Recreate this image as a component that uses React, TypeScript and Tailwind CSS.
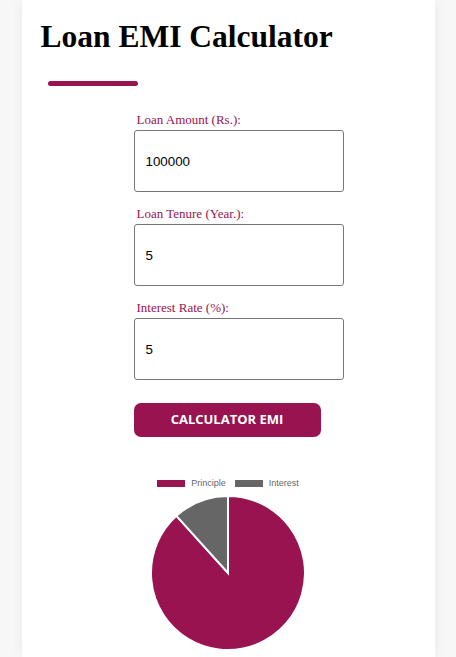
import React from "react";

const MAROON = "#98134f";

function pieSlice(cx: number, cy: number, r: number, startFrac: number, endFrac: number) {
  const a0 = startFrac * Math.PI * 2 - Math.PI / 2;
  const a1 = endFrac * Math.PI * 2 - Math.PI / 2;
  const x0 = cx + r * Math.cos(a0);
  const y0 = cy + r * Math.sin(a0);
  const x1 = cx + r * Math.cos(a1);
  const y1 = cy + r * Math.sin(a1);
  const large = endFrac - startFrac > 0.5 ? 1 : 0;
  return `M${cx} ${cy} L${x0} ${y0} A${r} ${r} 0 ${large} 1 ${x1} ${y1} Z`;
}

function Field({ label, value }: { label: string; value: string }) {
  return (
    <div className="flex flex-col">
      <label className="pl-[3px] mb-[3px] text-[13px] leading-[15px] text-[#98134f] font-['Liberation_Serif',serif]">
        {label}
      </label>
      <input
        readOnly
        value={value}
        className="w-[210px] h-[62px] px-[11px] border border-[#767676] rounded-[3px] text-[13.33px] text-black font-['Liberation_Sans',Arial,sans-serif] outline-none"
      />
    </div>
  );
}

export default function App() {
  const principal = 100000;
  const r = 5 / 1200;
  const n = 60;
  const emi = (principal * r * Math.pow(1 + r, n)) / (Math.pow(1 + r, n) - 1);
  const interest = emi * n - principal;
  const principalFrac = principal / (principal + interest);

  return (
    <div className="min-h-screen bg-[#f7f7f7]">
      <div className="mx-auto w-[413px] min-h-[657px] bg-white shadow-[0_0_12px_rgba(0,0,0,0.06)] px-[19px] pt-[18px]">
        <h1 className="text-[31.5px] leading-[37px] font-bold text-black font-['Liberation_Serif',serif]">
          Loan EMI Calculator
        </h1>
        <div className="ml-[7px] mt-[26px] w-[90px] h-[5px] rounded-full" style={{ backgroundColor: MAROON }} />

        <div className="ml-[93px] mt-[26px] flex flex-col gap-[14px]">
          <Field label="Loan Amount (Rs.):" value="100000" />
          <Field label="Loan Tenure (Year.):" value="5" />
          <Field label="Interest Rate (%):" value="5" />
        </div>

        <button className="ml-[93px] mt-[23px] w-[187px] h-[34px] rounded-[7px] bg-[#98134f] text-white text-[13px] font-bold uppercase font-['Open_Sans',sans-serif]">
          Calculator EMI
        </button>

        <div className="mt-[40px] flex flex-col items-center">
          <div className="flex items-center gap-[6px] text-[9px] text-[#666] font-['Liberation_Sans',Arial,sans-serif]">
            <span className="w-[28px] h-[7px]" style={{ backgroundColor: MAROON }} />
            <span>Principle</span>
            <span className="ml-[3px] w-[28px] h-[7px] bg-[#666666]" />
            <span>Interest</span>
          </div>
          <svg width="160" height="160" viewBox="0 0 160 160" className="mt-[2px]">
            <path d={pieSlice(80, 80, 77, 0, principalFrac)} fill={MAROON} stroke="#fff" strokeWidth="2" />
            <path d={pieSlice(80, 80, 77, principalFrac, 1)} fill="#666666" stroke="#fff" strokeWidth="2" />
          </svg>
        </div>
      </div>
    </div>
  );
}
